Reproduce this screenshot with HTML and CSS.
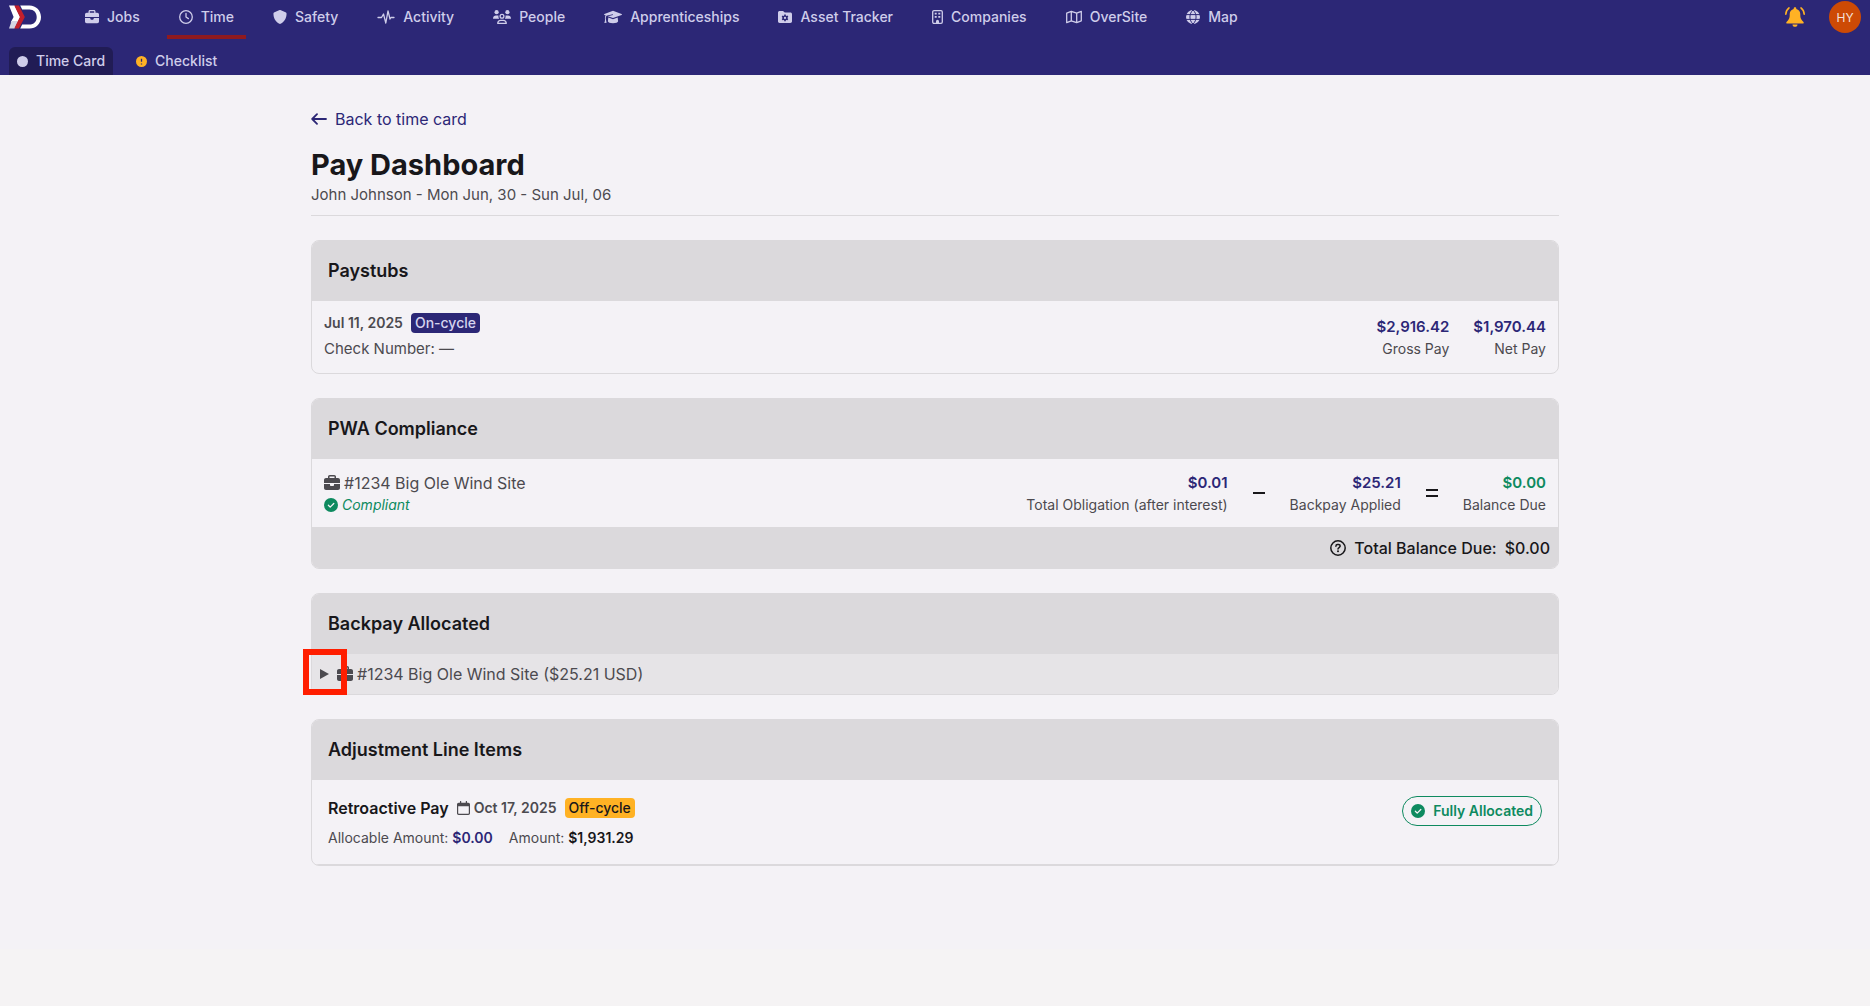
FILE: index.html
```html
<!DOCTYPE html>
<html lang="en">
<head>
  <meta charset="UTF-8">
  <meta name="viewport" content="width=device-width, initial-scale=1.0">
  <title>Pay Dashboard</title>
  <link rel="stylesheet" href="styles.css">
</head>
<body>
  <!-- shared icons -->
  <svg class="sprite" aria-hidden="true">
    <symbol id="briefcase" viewBox="0 0 512 512">
      <path d="M184 48H328c4.400 0 8 3.600 8 8V96H176V56c0-4.400 3.600-8 8-8zm-56 8V96H64C28.700 96 0 124.700 0 160v96H512V160c0-35.300-28.700-64-64-64H384V56c0-30.900-25.100-56-56-56H184c-30.900 0-56 25.100-56 56zM512 288H320v32c0 17.700-14.300 32-32 32H224c-17.700 0-32-14.300-32-32V288H0V416c0 35.300 28.700 64 64 64H448c35.300 0 64-28.700 64-64V288z"/>
    </symbol>
    <symbol id="check-circle" viewBox="0 0 16 16">
      <circle cx="8" cy="8" r="8"/>
      <path d="M5 8.300l2.100 2.100L11.200 6.300" fill="none" stroke="#f4f2f6" stroke-width="1.500" stroke-linecap="round" stroke-linejoin="round"/>
    </symbol>
  </svg>

  <header class="header">
    <div class="topbar">
      <a class="logo" href="#" aria-label="Home">
        <svg viewBox="0 0 97 70">
          <path fill="#fff" d="M0 0H17L34 35L26 52H5L14 35Z"/>
          <path fill="#d5d5e4" d="M8 47H28L17 70H0Z"/>
          <path fill="#c4202b" d="M16 0H30L48 35L30 70H16L33 35Z"/>
          <path fill="#fff" d="M34 0H62C82 0 97 15 97 35S82 70 62 70H34L40 58H62C75 58 84 49 84 35S75 12 62 12H40Z"/>
        </svg>
      </a>
      <nav class="nav">
        <a class="nav-item" href="#"><svg width="14" height="14"><use href="#briefcase"/></svg>Jobs</a>
        <a class="nav-item active" href="#"><svg class="line" width="14" height="14" viewBox="0 0 14 14"><circle cx="7" cy="7" r="6.300"/><path d="M7 3.500V7l2.400 1.600"/></svg>Time</a>
        <a class="nav-item" href="#"><svg width="14" height="14" viewBox="0 0 512 512"><path d="M256 0c4.600 0 9.200 1 13.400 2.900L457.700 82.800c22 9.300 38.400 31 38.300 57.200c-.5 99.200-41.300 280.700-213.600 363.200c-16.700 8-36.100 8-52.800 0C57.300 420.700 16.500 239.200 16 140c-.1-26.200 16.300-47.900 38.300-57.200L242.700 2.900C246.800 1 251.400 0 256 0z"/></svg>Safety</a>
        <a class="nav-item" href="#"><svg class="line" width="18" height="14" viewBox="0 0 18 14"><path d="M1 7.500h3.500L6.500 4l2.300 9L11 .8l2 8.200 1-1.500h3"/></svg>Activity</a>
        <a class="nav-item" href="#"><svg width="18" height="14" viewBox="0 0 18 14"><circle cx="3.600" cy="2.200" r="2.100"/><circle cx="14.400" cy="2.200" r="2.100"/><path d="M0 8.700C0 6.500 1.300 5.400 3 5.400h1.300c.7 0 1 .2 1.300.4-.4 1.200-.1 2.200.6 3H.5zM18 8.700c0-2.200-1.300-3.300-3-3.300h-1.300c-.7 0-1 .2-1.300.4.400 1.200.1 2.200-.6 3h5.700z"/><g class="line"><circle cx="9" cy="6.200" r="1.900"/><path d="M4.700 13.300c.2-2 1.400-3 3-3h2.600c1.600 0 2.800 1 3 3z"/></g></svg>People</a>
        <a class="nav-item" href="#"><svg width="18" height="14" viewBox="0 0 18 14"><path d="M9 .8l8.600 3.200c.5.200.5.800 0 1L9 8.100 3.800 6.200 9 5.100l-.2-.8-6.300 1.500C1.700 6.700 1.700 8 1.800 9l.8 3.700-2.300.2C1 11.500 1.200 10 .9 8.300c0-1.100.2-2.200.7-3L.4 5C0 4.800 0 4.200.4 4zM4.300 7.600L9 9.300l4.700-1.700.4 3.600c0 1.100-2.300 2-5.100 2s-5.100-.9-5.100-2z"/></svg>Apprenticeships</a>
        <a class="nav-item" href="#"><svg width="14" height="14" viewBox="0 0 14 14"><path fill-rule="evenodd" d="M1.700.9H5l1.800 1.700h5.500c1 0 1.700.7 1.700 1.700v7c0 1-.7 1.700-1.700 1.700H1.700C.7 13 0 12.300 0 11.300V2.600C0 1.600.7.900 1.700.9zM6.200 4.500v.9l-.8.500-.9-.4-.8 1.300.7.600v1l-.7.500.8 1.300.9-.3.800.4v1h1.600v-1l.8-.4.900.3.800-1.300-.7-.5v-1l.7-.6-.8-1.300-.9.400-.8-.5v-.9zM7 6.800a1.100 1.100 0 110 2.200 1.100 1.100 0 010-2.200z"/></svg>Asset Tracker</a>
        <a class="nav-item" href="#"><svg width="11" height="14" viewBox="0 0 11 14"><rect class="line" x=".7" y=".7" width="9.600" height="12.600" rx="1.300"/><path d="M2.700 2.800h2v1.800h-2zM6.300 2.800h2v1.800h-2zM2.700 6h2v1.800h-2zM6.300 6h2v1.800h-2zM4 13.500v-2.300a1.500 1.500 0 013 0v2.300z"/></svg>Companies</a>
        <a class="nav-item" href="#"><svg class="line" width="16" height="14" viewBox="0 0 16 14"><path d="M.7 3.200l4.600-1.900 5.400 1.900 4.600-1.900v9.500l-4.600 1.900-5.400-1.900-4.600 1.900zM5.300 1.300v9.500M10.700 3.200v9.500"/></svg>OverSite</a>
        <a class="nav-item" href="#"><svg width="14" height="14" viewBox="0 0 14 14"><circle cx="7" cy="7" r="7"/><path d="M0 4.600h14M0 9.400h14M7 0C2.900 3.500 2.900 10.500 7 14M7 0c4.100 3.500 4.100 10.500 0 14" fill="none" stroke="#2c2776"/></svg>Map</a>
      </nav>
      <div class="account">
        <button class="bell" aria-label="Notifications">
          <svg width="20" height="20" viewBox="0 0 20 20"><path d="M10 .3c.8 0 1.300.5 1.300 1.200v.6c2.400.5 4 2.500 4 5v1.500c0 2 .6 3.800 2 5.200l1 1c.9.900.4 1.800-.6 1.800H2.300c-1 0-1.500-.9-.6-1.800l1-1c1.400-1.400 2-3.200 2-5.200V7.100c0-2.500 1.600-4.500 4-5v-.6C8.700.8 9.200.3 10 .3zM7.500 17.500h5c0 1.500-1 2.300-2.500 2.300s-2.500-.8-2.500-2.300z"/><path d="M4 .9C2 2.500.9 4.500.8 7.300M16 .9c2 1.600 3.100 3.600 3.200 6.400" fill="none" stroke="currentColor" stroke-width="1.600" stroke-linecap="round"/></svg>
        </button>
        <button class="avatar">HY</button>
      </div>
    </div>
    <nav class="tabs">
      <a class="tab selected" href="#"><svg width="11" height="11" viewBox="0 0 11 11"><circle cx="5.500" cy="5.500" r="5.500"/></svg>Time Card</a>
      <a class="tab" href="#"><svg width="11" height="11" viewBox="0 0 11 11"><circle cx="5.500" cy="5.500" r="5.500" fill="#ffb224"/><path d="M5.500 2.800v3M5.500 7.600v.8" stroke="#2c2776" stroke-width="1.300"/></svg>Checklist</a>
    </nav>
  </header>

  <main class="page">
    <a class="back" href="#"><svg width="16" height="12" viewBox="0 0 16 12"><path d="M15 6H1.500M6 1.200L1.200 6 6 10.800" fill="none" stroke="currentColor" stroke-width="1.800" stroke-linecap="round" stroke-linejoin="round"/></svg>Back to time card</a>
    <h1>Pay Dashboard</h1>
    <p class="subtitle">John Johnson - Mon Jun, 30 - Sun Jul, 06</p>

    <section class="card">
      <h2>Paystubs</h2>
      <div class="row">
        <div class="stub">
          <div class="stub-date"><span class="date">Jul 11, 2025</span><span class="badge on">On-cycle</span></div>
          <div class="check-number">Check Number: —</div>
        </div>
        <div class="amounts">
          <div class="amount"><strong>$2,916.42</strong><span>Gross Pay</span></div>
          <div class="amount"><strong>$1,970.44</strong><span>Net Pay</span></div>
        </div>
      </div>
    </section>

    <section class="card">
      <h2>PWA Compliance</h2>
      <div class="row compliance">
        <div>
          <div class="job"><svg width="16" height="16"><use href="#briefcase"/></svg>#1234 Big Ole Wind Site</div>
          <div class="compliant"><svg width="14" height="14"><use href="#check-circle"/></svg>Compliant</div>
        </div>
        <div class="amounts">
          <div class="amount"><strong>$0.01</strong><span>Total Obligation (after interest)</span></div>
          <svg class="operator" width="14" height="14" viewBox="0 0 14 14" role="img" aria-label="minus"><path d="M1 7h12"/></svg>
          <div class="amount"><strong>$25.21</strong><span>Backpay Applied</span></div>
          <svg class="operator" width="14" height="14" viewBox="0 0 14 14" role="img" aria-label="equals"><path d="M1 4h12M1 10h12"/></svg>
          <div class="amount settled"><strong>$0.00</strong><span>Balance Due</span></div>
        </div>
      </div>
      <div class="total">
        <svg width="16" height="16" viewBox="0 0 16 16"><circle cx="8" cy="8" r="7.200" fill="none" stroke="currentColor" stroke-width="1.500"/><path d="M5.900 6.200c0-1 .7-1.700 1.700-1.700h.9c1 0 1.700.7 1.700 1.600 0 1.400-2.200 1.500-2.200 2.900" fill="none" stroke="currentColor" stroke-width="1.500" stroke-linecap="round"/><circle cx="8" cy="11.300" r="1"/></svg>
        <span>Total Balance Due:</span><span>$0.00</span>
      </div>
    </section>

    <section class="card">
      <h2>Backpay Allocated</h2>
      <details class="backpay">
        <summary>
          <svg class="caret" width="9" height="10" viewBox="0 0 9 10"><path d="M0 0l9 5-9 5z"/></svg>
          <span class="job"><svg width="16" height="16"><use href="#briefcase"/></svg>#1234 Big Ole Wind Site ($25.21 USD)</span>
          <span class="highlight"></span>
        </summary>
      </details>
    </section>

    <section class="card">
      <h2>Adjustment Line Items</h2>
      <div class="row adjustment">
        <div class="item">
          <div class="item-title">
            <strong>Retroactive Pay</strong>
            <span class="date"><svg width="13" height="14" viewBox="0 0 13 14"><path d="M3.600.6v3M9.400.6v3" fill="none" stroke="currentColor" stroke-width="1.300" stroke-linecap="round"/><path fill-rule="evenodd" d="M1.700 1.800h9.600c1 0 1.700.7 1.700 1.700v8.800c0 1-.7 1.700-1.700 1.700H1.700C.7 14 0 13.300 0 12.300V3.500c0-1 .7-1.700 1.700-1.700zM1.200 5.300v7c0 .3.200.5.500.5h9.600c.3 0 .5-.2.5-.5v-7z"/></svg>Oct 17, 2025</span>
            <span class="badge off">Off-cycle</span>
          </div>
          <div class="item-amounts">
            <span>Allocable Amount: <strong class="brand">$0.00</strong></span>
            <span>Amount: <strong>$1,931.29</strong></span>
          </div>
        </div>
        <span class="pill"><svg width="14" height="14"><use href="#check-circle"/></svg>Fully Allocated</span>
      </div>
    </section>
  </main>
</body>
</html>
```
FILE: styles.css
```css
* {
  margin: 0;
  padding: 0;
  box-sizing: border-box;
}

body {
  min-height: 100vh;
  font-family: Inter, "Liberation Sans", sans-serif;
  font-size: 16px;
  line-height: 24px;
  color: #4c4a4f;
  background: #f5f3f4;
}

a {
  text-decoration: none;
}

button {
  border: none;
  font-family: inherit;
  cursor: pointer;
}

svg {
  fill: currentColor;
  flex-shrink: 0;
}

.sprite {
  position: absolute;
  width: 0;
  height: 0;
}

.line {
  fill: none;
  stroke: currentColor;
  stroke-width: 1.3;
  stroke-linecap: round;
  stroke-linejoin: round;
}

/* header */
.header {
  height: 75px;
  background: #2c2776;
  color: #cfcdea;
  font-size: 14px;
  line-height: 20px;
  font-weight: 500;
}

.topbar {
  display: flex;
  align-items: center;
  height: 34px;
  padding: 0 9px;
}

.logo svg {
  display: block;
  width: 32px;
  height: 24px;
}

.nav {
  display: flex;
  gap: 15px;
  margin-left: 32px;
}

.nav-item {
  display: flex;
  align-items: center;
  gap: 8px;
  height: 44px;
  padding: 0 12px;
  border-top: 4px solid transparent;
  border-bottom: 4px solid transparent;
  color: inherit;
}

.nav-item.active {
  border-bottom-color: #8f1a1f;
}

.account {
  display: flex;
  align-items: center;
  gap: 24px;
  margin-left: auto;
}

.bell {
  display: flex;
  background: none;
  color: #ffb224;
}

.avatar {
  width: 32px;
  height: 32px;
  border-radius: 50%;
  background: #cd4a05;
  color: #f4e3dc;
  font-size: 12px;
}

.tabs {
  display: flex;
  gap: 15px;
  padding: 13px 9px 0;
}

.tab {
  display: flex;
  align-items: center;
  gap: 8px;
  height: 28px;
  padding: 0 8px;
  border-radius: 6px 6px 0 0;
  color: inherit;
}

.tab.selected {
  background: #211c55;
}

/* page */
.page {
  min-height: 874px;
  padding: 32px 24px 24px;
  background: #f4f2f6;
}

.page > * {
  max-width: 1248px;
  margin-left: auto;
  margin-right: auto;
}

.back {
  display: flex;
  align-items: center;
  gap: 8px;
  color: #2c2776;
}

h1 {
  margin-top: 16px;
  font-size: 29px;
  line-height: 36px;
  font-weight: 700;
  color: #18171a;
}

.subtitle {
  padding-bottom: 8px;
  border-bottom: 1px solid #dbd9dc;
}

.subtitle,
.check-number {
  font-size: 15px;
}

.card {
  margin-top: 24px;
  border: 1px solid #dbd9dc;
  border-radius: 8px;
  overflow: hidden;
}

.card h2 {
  padding: 16px;
  background: #dbd9dc;
  font-size: 18px;
  line-height: 28px;
  font-weight: 600;
  color: #18171a;
}

.row {
  display: flex;
  justify-content: space-between;
  align-items: center;
  padding: 12px;
}

.stub-date,
.job,
.compliant,
.date {
  display: flex;
  align-items: center;
  gap: 4px;
}

.stub-date {
  gap: 8px;
  margin-bottom: 4px;
}

.date {
  font-size: 14px;
  line-height: 20px;
  font-weight: 600;
}

.badge {
  padding: 0 4px;
  border-radius: 4px;
  font-size: 14px;
  line-height: 20px;
  font-weight: 500;
}

.badge.on {
  background: #2c2776;
  color: #d6d4ee;
}

.badge.off {
  background: #ffb224;
  color: #18171a;
}

.amounts {
  display: flex;
  align-items: center;
  gap: 24px;
}

.amount {
  display: flex;
  flex-direction: column;
  align-items: flex-end;
  font-size: 14px;
  line-height: 20px;
}

.amount strong {
  font-size: 15px;
  line-height: 24px;
  font-weight: 600;
  color: #2c2776;
}

.amount.settled strong {
  color: #0e8a5f;
}

.operator {
  stroke: #18171a;
  stroke-width: 2;
}

.compliant {
  font-size: 14px;
  line-height: 20px;
  font-style: italic;
  color: #0e8a5f;
}

.total {
  display: flex;
  justify-content: flex-end;
  align-items: center;
  gap: 8px;
  padding: 9px 8px 8px;
  background: #dbd9dc;
  font-weight: 500;
  color: #18171a;
}

.backpay {
  background: #e6e4e7;
  border-radius: 0 0 7px 7px;
}

.card:has(.backpay) {
  overflow: visible;
}

.card:has(.backpay) h2 {
  border-radius: 7px 7px 0 0;
}

.backpay summary {
  position: relative;
  display: flex;
  align-items: center;
  gap: 8px;
  padding: 8px;
  list-style: none;
  cursor: pointer;
}

.highlight {
  position: absolute;
  left: -9px;
  top: -5px;
  width: 44px;
  height: 46px;
  border: 6px solid #ff1e00;
}

.adjustment {
  align-items: flex-start;
  padding: 16px;
  border-bottom: 1px solid #dbd9dc;
}

.item-title {
  display: flex;
  align-items: center;
  gap: 8px;
}

.item-title strong {
  font-weight: 600;
  color: #18171a;
}

.item-amounts {
  display: flex;
  gap: 16px;
  margin-top: 8px;
  font-size: 14px;
  line-height: 20px;
}

.item-amounts strong {
  font-weight: 600;
  color: #18171a;
}

.item-amounts .brand {
  color: #2c2776;
}

.pill {
  display: flex;
  align-items: center;
  gap: 8px;
  padding: 4px 8px;
  border: 1px solid #0e8a5f;
  border-radius: 15px;
  font-size: 14px;
  line-height: 20px;
  font-weight: 600;
  color: #0e8a5f;
}
```
